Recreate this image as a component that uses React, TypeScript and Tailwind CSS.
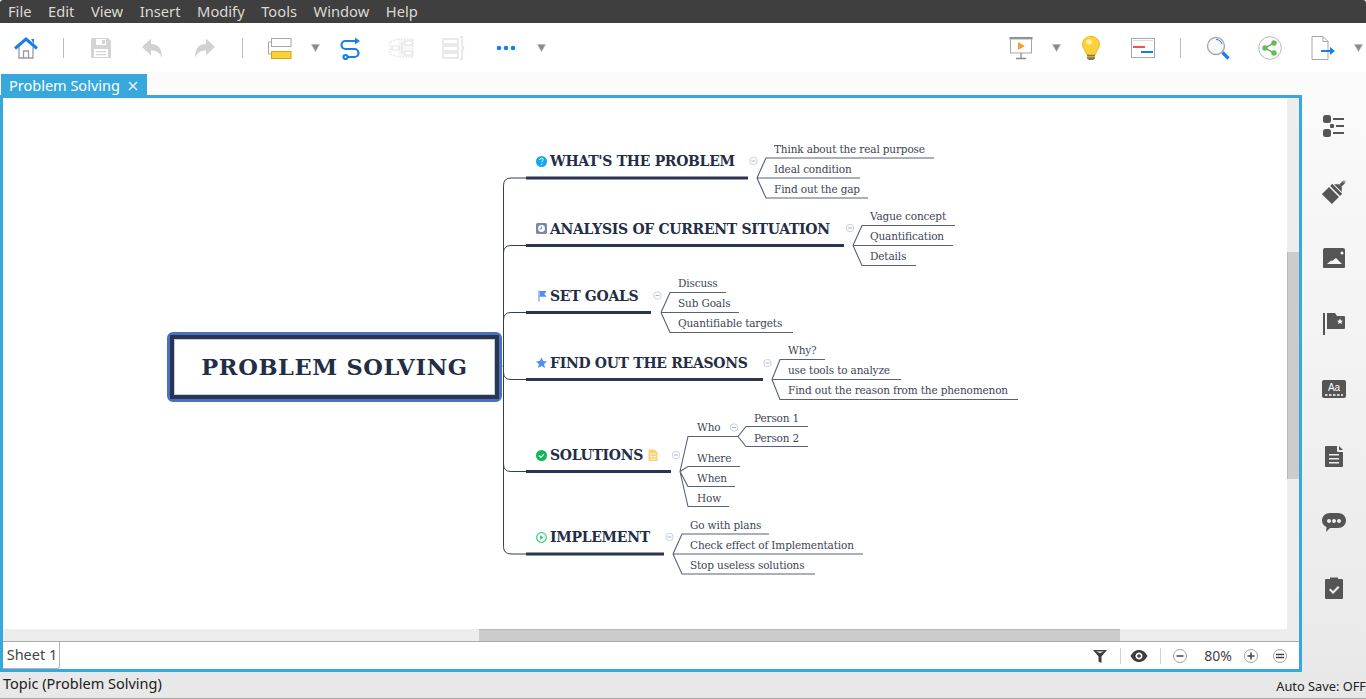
const menuItems = ['File', 'Edit', 'View', 'Insert', 'Modify', 'Tools', 'Window', 'Help']

const mainTopics = [
  { text: "WHAT'S THE PROBLEM", pos: 'left-[550px] top-[151px]' },
  { text: 'ANALYSIS OF CURRENT SITUATION', pos: 'left-[550px] top-[219px]' },
  { text: 'SET GOALS', pos: 'left-[550px] top-[286px]' },
  { text: 'FIND OUT THE REASONS', pos: 'left-[550px] top-[353px]' },
  { text: 'SOLUTIONS', pos: 'left-[550px] top-[445px]' },
  { text: 'IMPLEMENT', pos: 'left-[550px] top-[527px]' },
]

const subTopics = [
  { text: 'Think about the real purpose', pos: 'left-[774px] top-[142px]' },
  { text: 'Ideal condition', pos: 'left-[774px] top-[162px]' },
  { text: 'Find out the gap', pos: 'left-[774px] top-[182px]' },
  { text: 'Vague concept', pos: 'left-[870px] top-[209px]' },
  { text: 'Quantification', pos: 'left-[870px] top-[229px]' },
  { text: 'Details', pos: 'left-[870px] top-[249px]' },
  { text: 'Discuss', pos: 'left-[678px] top-[276px]' },
  { text: 'Sub Goals', pos: 'left-[678px] top-[296px]' },
  { text: 'Quantifiable targets', pos: 'left-[678px] top-[316px]' },
  { text: 'Why?', pos: 'left-[788px] top-[343px]' },
  { text: 'use tools to analyze', pos: 'left-[788px] top-[363px]' },
  { text: 'Find out the reason from the phenomenon', pos: 'left-[788px] top-[383px]' },
  { text: 'Who', pos: 'left-[697px] top-[420px]' },
  { text: 'Person 1', pos: 'left-[754px] top-[411px]' },
  { text: 'Person 2', pos: 'left-[754px] top-[431px]' },
  { text: 'Where', pos: 'left-[697px] top-[451px]' },
  { text: 'When', pos: 'left-[697px] top-[471px]' },
  { text: 'How', pos: 'left-[697px] top-[491px]' },
  { text: 'Go with plans', pos: 'left-[690px] top-[518px]' },
  { text: 'Check effect of Implementation', pos: 'left-[690px] top-[538px]' },
  { text: 'Stop useless solutions', pos: 'left-[690px] top-[558px]' },
]

const thickLines = [
  [526, 748, 178],
  [526, 844, 245.5],
  [526, 651, 312.5],
  [526, 763, 379.5],
  [526, 671, 471.5],
  [526, 664, 554],
]

const branchPaths = [
  'M757 178 L766 158 H934 M757 178 H860 M757 178 L766 198 H868',
  'M853 245.500 L862 225.500 H955 M853 245.500 H953 M853 245.500 L862 265.500 H916',
  'M661 312.500 L670 292.500 H726 M661 312.500 H739 M661 312.500 L670 332.500 H793',
  'M772 379.500 L780 359.500 H825 M772 379.500 H901 M772 379.500 L780 399.500 H1018',
  'M680 471.500 L688 436.500 H738 L746 426.500 H808 M738 436.500 L746 446.500 H808 M680 471.500 L688 466.500 H740 M680 471.500 L688 486.500 H735 M680 471.500 L688 506.500 H729',
  'M673 554 L682 534 H769 M673 554 H863 M673 554 L682 574 H815',
]

const collapseDots = [
  [753.5, 161],
  [850, 228],
  [657.5, 295.5],
  [767.5, 363],
  [676, 455],
  [734, 427.5],
  [669.5, 537],
]

function Caret() {
  return (
    <svg width="9" height="9" viewBox="0 0 9 9">
      <path d="M0.500 1.500H8.500L4.500 8.500Z" fill="#8a8a8a" stroke="#b5b5b5" strokeWidth="0.6" />
    </svg>
  )
}

function Separator() {
  return <div className="h-[20px] w-px bg-[#bdbdbd]" />
}

function Collapse({ x, y }: { x: number; y: number }) {
  return (
    <g fill="none" stroke="#c4d0ec" strokeWidth="1">
      <circle cx={x} cy={y} r="3.7" fill="#fff" />
      <path d={`M${x - 2} ${y}H${x + 2}`} stroke="#aab4c8" />
    </g>
  )
}

function MindMap() {
  return (
    <div className="relative min-w-0 flex-1 overflow-hidden bg-white">
      <div className="absolute -left-[3px] -top-[98px] h-[699px] w-[1366px] font-['DejaVu_Serif',serif] text-[#232d45]">
        <svg className="absolute left-0 top-0" width="1366" height="699" viewBox="0 0 1366 699" fill="none">
          <path d="M497 366H503.500" stroke="#8f97a8" />
          <path
            d="M526 178H511Q503.500 178 503.500 185.500V546.500Q503.500 554 511 554H526M526 245.500H511Q503.500 245.500 503.500 253M526 312.500H511Q503.500 312.500 503.500 320M503.500 372Q503.500 379.500 511 379.500H526M503.500 464Q503.500 471.500 511 471.500H526"
            stroke="#343d52"
          />
          {branchPaths.map((d) => (
            <path key={d} d={d} stroke="#596176" strokeWidth="1.1" />
          ))}
          {thickLines.map(([a, b, y]) => (
            <path key={y} d={`M${a} ${y}H${b}`} stroke="#2a3550" strokeWidth="3" />
          ))}
          {collapseDots.map(([x, y]) => (
            <Collapse key={x} x={x} y={y} />
          ))}

          <circle cx="541.500" cy="161.500" r="5.500" fill="#10a8f0" />
          <path d="M539.800 160q.1-1.800 1.800-1.800 1.700.1 1.700 1.500c0 1.300-1.600 1.300-1.600 2.600" stroke="#fff" strokeWidth="1" />
          <circle cx="541.700" cy="164.400" r=".6" fill="#fff" />

          <rect x="536" y="223" width="11" height="11" rx="1.500" fill="#7c86ab" />
          <circle cx="541.500" cy="228.500" r="3.400" fill="#fff" />
          <path d="M541.500 226.500v2.400h-2" stroke="#7c86ab" strokeWidth="1" />

          <path d="M539 290.500v11" stroke="#8fb4f4" strokeWidth="1.600" />
          <path d="M539.800 291h6.800l-2.200 3 2.200 2.800h-6.800z" fill="#4d8ff2" />

          <path d="M541.500 357.500l1.700 3.600 3.800.4-2.900 2.600.9 3.900-3.500-2-3.500 2 .9-3.900-2.900-2.600 3.800-.4z" fill="#4d8ff2" />

          <circle cx="541.500" cy="455.500" r="5.500" fill="#0cb95a" />
          <path d="M539 455.500l1.800 1.800 3.200-3.200" stroke="#fff" strokeWidth="1.200" />
          <path d="M648.500 449.500h6l3 3v8.500h-9z" fill="#f9d36f" />
          <path d="M650 454h6M650 456.500h6M650 459h6" stroke="#fff" strokeWidth=".8" />

          <circle cx="541.500" cy="537.500" r="4.800" stroke="#2fd078" strokeWidth="1.200" />
          <path d="M540 535.300l3.600 2.200-3.600 2.200z" fill="#2fd078" />
        </svg>

        <div className="absolute left-[167px] top-[332px] flex h-[70px] w-[335px] rounded-md border-[3px] border-[#4a70c0] bg-white">
          <div className="flex flex-1 items-center justify-center border-[4px] border-[#2a3550] text-[22.5px] font-bold leading-none tracking-[0.65px] shadow-[inset_0_0_0_1px_#c5cbd8]">
            PROBLEM SOLVING
          </div>
        </div>

        {mainTopics.map((topic) => (
          <div key={topic.text} className={`absolute whitespace-nowrap text-[14px] font-bold leading-[20px] tracking-[-0.3px] ${topic.pos}`}>
            {topic.text}
          </div>
        ))}
        {subTopics.map((topic) => (
          <div key={topic.text} className={`absolute whitespace-nowrap text-[10.5px] leading-[14px] tracking-[-0.15px] text-[#3d4558] ${topic.pos}`}>
            {topic.text}
          </div>
        ))}
      </div>
    </div>
  )
}

function SideIcons() {
  return (
    <div className="flex w-[64px] flex-col items-center gap-[42px] bg-gradient-to-b from-[#fbfbfb] to-[#e9e9e9] pt-[42px] text-[#555555]">
      <svg width="24" height="24" viewBox="0 0 24 24" fill="currentColor">
        <rect x="1" y="1" width="8" height="8" rx="2.500" />
        <rect x="1" y="15" width="8" height="8" rx="2.500" />
        <rect x="8" y="10" width="4" height="4" rx="1" />
        <path d="M11 4h11v2H11zM14 11h8v2h-8zM11 18h11v2H11z" />
      </svg>
      <svg width="24" height="24" viewBox="0 0 24 24" fill="currentColor">
        <g transform="rotate(45 12 12)">
          <path fillRule="evenodd" d="M10.500 -2a1.500 1.500 0 0 1 3 0v5h-3zM11.300 -2.200a.7.7 0 1 0 1.400 0 .7.7 0 1 0-1.400 0z" />
          <path d="M10 3h4l3.500 3.500h-11zM5 7.500h14v3H5zM5 12h14v10H5z" />
        </g>
      </svg>
      <svg width="24" height="24" viewBox="0 0 24 24" fill="currentColor">
        <path fillRule="evenodd" d="M3 2h18a2 2 0 0 1 2 2v17a1 1 0 0 1-1 1H2a1 1 0 0 1-1-1V4a2 2 0 0 1 2-2zm2 16h15l-6-6-4 3-1-.5zM18.500 7a1.500 1.500 0 1 0 0-.1z" />
      </svg>
      <svg width="24" height="24" viewBox="0 0 24 24" fill="currentColor">
        <path fillRule="evenodd" d="M1 1h2v22H1zM5 1h8l2 3h7a1 1 0 0 1 1 1v11a1 1 0 0 1-1 1H5zm13 5.500l-1 2-2 .2 1.500 1.400-.5 2 2-1 2 1-.5-2 1.500-1.400-2-.2z" />
      </svg>
      <svg width="24" height="24" viewBox="0 0 24 24">
        <rect y="2" width="24" height="18" rx="2" fill="currentColor" />
        <text x="12" y="13" textAnchor="middle" fontSize="10" fill="#fff" fontFamily="'Liberation Sans',sans-serif">
          Aa
        </text>
        <path d="M3 17h18" stroke="#fff" strokeWidth="1.500" strokeDasharray="2.500 1.500" />
      </svg>
      <svg width="24" height="24" viewBox="0 0 24 24" fill="currentColor">
        <path fillRule="evenodd" d="M4 2a1 1 0 0 0-1 1v19a1 1 0 0 0 1 1h16a1 1 0 0 0 1-1V8h-5a1 1 0 0 1-1-1V2zM7 10h10v1.500H7zm0 4h10v1.500H7zm0 4h10v1.500H7zM17 2l4 4h-4z" />
      </svg>
      <svg width="24" height="24" viewBox="0 0 24 24" fill="currentColor">
        <path fillRule="evenodd" d="M8 3h8c4.500 0 8 3 8 7.500S20.500 18 16 18H8l-4 4 .5-5C2 16 0 13.500 0 10.500 0 6 3.500 3 8 3zm-1 6a2 2 0 1 0 .01 0zM12 9a2 2 0 1 0 .01 0zm5 0a2 2 0 1 0 .01 0z" />
      </svg>
      <svg width="24" height="24" viewBox="0 0 24 24" fill="currentColor">
        <path fillRule="evenodd" d="M4 3h4V1.500h8V3h4a1 1 0 0 1 1 1v18a1 1 0 0 1-1 1H4a1 1 0 0 1-1-1V4a1 1 0 0 1 1-1zm3 11l1.500-1.500L11 15l5-5 1.500 1.500L11 18z" />
      </svg>
    </div>
  )
}

function Toolbar() {
  return (
    <div className="flex h-[49px] items-center bg-white pl-[14px] pr-[3px]">
      <svg width="24" height="24" viewBox="0 0 24 24" fill="none">
        <path d="M5 11v11h14V11" stroke="#9a9a9a" strokeWidth="1.300" fill="#fff" />
        <path d="M9.500 22v-7h5v7" stroke="#9a9a9a" strokeWidth="1.300" />
        <path d="M1 12.500L12 3l11 9.500" stroke="#1a7ee8" strokeWidth="3" />
        <path d="M17 3h3v5" fill="#1a7ee8" />
      </svg>
      <div className="ml-[25px]"><Separator /></div>
      <svg className="ml-[25px]" width="24" height="24" viewBox="0 0 24 24">
        <path fillRule="evenodd" d="M3 2h16l3 3v17H2V3zM7 3v6h10V3zM13 4h3v4h-3zM5 13v8h14v-8zM7 15h10v1.200H7zM7 18h10v1.200H7z" fill="#d4d4d4" />
      </svg>
      <svg className="ml-[27px]" width="24" height="24" viewBox="0 0 24 24">
        <path d="M2 11L11 2.500V8c7 0 11 4 11 14-2-5-5-7.500-11-7.500v5z" fill="#d2d2d2" />
      </svg>
      <svg className="ml-[29px]" width="24" height="24" viewBox="0 0 24 24">
        <path d="M22 11L13 2.500V8C6 8 2 12 2 22c2-5 5-7.500 11-7.500v5z" fill="#d2d2d2" />
      </svg>
      <div className="ml-[25px]"><Separator /></div>
      <svg className="ml-[25px]" width="24" height="24" viewBox="0 0 24 24" fill="none">
        <rect x="3.500" y="2.500" width="19.500" height="8" fill="#fff" stroke="#a6a6a6" />
        <path d="M3.500 6H0.500V18H3.500" stroke="#a6a6a6" />
        <rect x="3.500" y="15.500" width="19.500" height="7" fill="#ffd233" stroke="#d2a520" />
      </svg>
      <div className="ml-[19px]"><Caret /></div>
      <svg className="ml-[18px]" width="24" height="24" viewBox="0 0 24 24" fill="none" stroke="#1a7ee8" strokeWidth="2.200">
        <path d="M19 5H7.500a4 4 0 0 0 0 8h9a4 4 0 0 1 0 8H9" />
        <path d="M17 1.500l5 3.500-5 3.500z" fill="#1a7ee8" stroke="none" />
        <circle cx="7.500" cy="21" r="2" fill="#fff" />
      </svg>
      <svg className="ml-[27px]" width="26" height="24" viewBox="0 0 26 24" fill="none" stroke="#e2e2e2">
        <path d="M1 6l8-3M1 18l8 3M9 3h15v18H9M1 6v12" fill="#f6f6f6" strokeDasharray="2 1" />
        <rect x="3" y="10" width="7" height="4" fill="#fff" />
        <rect x="16" y="5" width="7" height="4" fill="#fff" />
        <rect x="16" y="15" width="7" height="4" fill="#fff" />
        <path d="M10 12h3M13 7v10M13 7h3M13 17h3" />
      </svg>
      <svg className="ml-[27px]" width="24" height="24" viewBox="0 0 24 24" fill="none" stroke="#dedede" strokeWidth="1.300">
        <rect x="1" y="3" width="15" height="5" />
        <rect x="1" y="10" width="15" height="5" />
        <rect x="1" y="17" width="15" height="5" />
        <path d="M18 1h2v9l2 2-2 2v9h-2" />
      </svg>
      <svg className="ml-[28px]" width="24" height="24" viewBox="0 0 24 24" fill="#1a7ee8">
        <circle cx="5" cy="12" r="2.300" />
        <circle cx="12" cy="12" r="2.300" />
        <circle cx="19" cy="12" r="2.300" />
      </svg>
      <div className="ml-[19px]"><Caret /></div>

      <svg className="ml-auto" width="24" height="24" viewBox="0 0 24 24" fill="none">
        <rect x="0.500" y="1" width="23" height="2.500" fill="#8a8a8a" />
        <rect x="1.500" y="3" width="21" height="14" fill="#fff" stroke="#a8a8a8" />
        <path d="M9 6l7 4-7 4z" fill="#f2a032" />
        <path d="M12 17v5M7 22.500h10" stroke="#8a8a8a" strokeWidth="1.300" />
      </svg>
      <div className="ml-[19px]"><Caret /></div>
      <svg className="ml-[18px]" width="24" height="24" viewBox="0 0 24 24">
        <path d="M12 .5c5 0 8.500 3.500 8.500 8 0 4-3.500 6-4 10h-9c-.5-4-4-6-4-10 0-4.500 3.500-8 8.500-8z" fill="#fdd13b" stroke="#eeb31e" />
        <path d="M8 19h8v3.500l-2 1.500h-4l-2-1.500z" fill="#7f7654" />
        <path d="M8 20.800h8" stroke="#e4c75a" />
        <ellipse cx="10" cy="6" rx="3" ry="2.500" fill="#fff0a8" />
      </svg>
      <svg className="ml-[28px]" width="24" height="24" viewBox="0 0 24 24" fill="none">
        <rect x="0.500" y="2.500" width="23" height="19" fill="#fff" stroke="#a8a8a8" />
        <path d="M2 4.500h20" stroke="#dcdcdc" />
        <path d="M2 11h12" stroke="#f0544f" strokeWidth="2" />
        <path d="M10 16h12" stroke="#1a7ee8" strokeWidth="2" />
      </svg>
      <div className="ml-[25px]"><Separator /></div>
      <svg className="ml-[25px]" width="24" height="24" viewBox="0 0 24 24" fill="none">
        <circle cx="10" cy="10" r="8.500" fill="#f8f9fb" stroke="#a9a9a9" strokeWidth="1.300" />
        <path d="M10 3.500a6.500 6.500 0 0 1 6 4.500" stroke="#1a7ee8" />
        <path d="M16.500 16.500l6 6" stroke="#1a7ee8" strokeWidth="3.200" />
      </svg>
      <svg className="ml-[28px]" width="24" height="24" viewBox="0 0 24 24" fill="none">
        <circle cx="12" cy="12" r="11.300" fill="#fff" stroke="#b9b9b9" />
        <path d="M7 12l9-5M7 12l9 5" stroke="#65bb5a" strokeWidth="1.500" />
        <circle cx="7" cy="12" r="2.700" fill="#65bb5a" />
        <circle cx="16" cy="7" r="2.700" fill="#65bb5a" />
        <circle cx="16" cy="17" r="2.700" fill="#65bb5a" />
      </svg>
      <svg className="ml-[29px]" width="24" height="24" viewBox="0 0 24 24" fill="none">
        <path d="M1 .5h11l5 5v18H1z" fill="#fff" stroke="#a8a8a8" />
        <path d="M12 .5v5h5" stroke="#a8a8a8" />
        <path d="M10 15h10" stroke="#1a7ee8" strokeWidth="2" />
        <path d="M19 11l5 4-5 4z" fill="#1a7ee8" />
      </svg>
      <div className="ml-[19px]"><Caret /></div>
    </div>
  )
}

function SheetBar() {
  return (
    <div className="flex h-[28px] items-center border-t border-[#aaaaaa] bg-white text-[#444444]">
      <div className="flex h-full w-[57px] items-center justify-center rounded-br-[3px] border-b border-r border-[#b5b5b5] pb-px pl-[2px] text-[14.5px]">
        Sheet 1
      </div>
      <svg className="ml-auto" width="16" height="16" viewBox="0 0 16 16" fill="#3d3d3d">
        <path fillRule="evenodd" d="M1 2h14L9.500 8.500V15l-3-1.500v-5zM4 3.500l4 1.500 4-1.500z" />
      </svg>
      <div className="ml-[12px] mr-[9px] h-[16px] w-px bg-[#d0d0d0]" />
      <svg width="18" height="14" viewBox="0 0 18 14" fill="#3d3d3d">
        <path fillRule="evenodd" d="M0.500 7C3 2.500 6 1 9 1s6 1.500 8.500 6C15 11.500 12 13 9 13S3 11.500.5 7zM9 3.500a3.500 3.500 0 1 0 .01 0z" />
        <circle cx="9" cy="7" r="1.800" />
      </svg>
      <div className="mx-[12px] h-[16px] w-px bg-[#d0d0d0]" />
      <svg className="mr-[14px]" width="14" height="14" viewBox="0 0 14 14" fill="none" stroke="#444444">
        <circle cx="7" cy="7" r="6.500" stroke="#a0a0a0" />
        <path d="M3.500 7h7" strokeWidth="1.500" />
      </svg>
      <span className="w-[34px] text-center text-[14px]">80%</span>
      <svg className="ml-[9px]" width="14" height="14" viewBox="0 0 14 14" fill="none" stroke="#444444">
        <circle cx="7" cy="7" r="6.500" stroke="#a0a0a0" />
        <path d="M3.500 7h7M7 3.500v7" strokeWidth="1.500" />
      </svg>
      <svg className="ml-[15px] mr-[12px]" width="14" height="14" viewBox="0 0 14 14" fill="none" stroke="#444444">
        <circle cx="7" cy="7" r="6.500" stroke="#a0a0a0" />
        <path d="M3 5.500h8M3 8.500h8" strokeWidth="1.500" />
      </svg>
    </div>
  )
}

export default function App() {
  return (
    <div className="flex h-[699px] w-[1366px] flex-col overflow-hidden bg-white font-['Noto_Sans',sans-serif]">
      <div className="flex h-[23px] items-center gap-[16.6px] rounded-t-[3px] bg-[#3f3f3f] pl-2 text-[14.7px] text-[#dcd9d3]">
        {menuItems.map((item) => (
          <span key={item}>{item}</span>
        ))}
      </div>
      <Toolbar />
      <div className="flex min-h-0 flex-1">
        <div className="flex w-[1302px] flex-col bg-[#fbfbfb]">
          <div className="flex h-[23px] items-end pl-px">
            <div className="flex h-[21px] w-[146px] items-center gap-[8px] bg-[#38a8dc] pl-2 pt-[2px] text-[14.5px] text-white">
              Problem Solving
              <svg width="10" height="10" viewBox="0 0 10 10" stroke="#fff" strokeWidth="1.300">
                <path d="M1 1l8 8M9 1l-8 8" />
              </svg>
            </div>
          </div>
          <div className="flex min-h-0 flex-1 flex-col border-[3px] border-[#38a8dc]">
            <div className="flex min-h-0 flex-1">
              <MindMap />
              <div className="flex w-[12px] flex-col bg-[#ededed] pt-[154px]">
                <div className="h-[227px] border-l border-[#b9b9b9] bg-[#cccccc]" />
              </div>
            </div>
            <div className="h-[12px] bg-[#ededed] pl-[476px]">
              <div className="h-full w-[641px] border-t border-[#b9b9b9] bg-[#cccccc]" />
            </div>
            <SheetBar />
          </div>
        </div>
        <SideIcons />
      </div>
      <div className="flex h-[27px] items-start justify-between border-b border-[#a8a8a8] bg-[#e8e8e8] pl-[3px] text-[#222222]">
        <span className="text-[14.5px] leading-[23px]">Topic (Problem Solving)</span>
        <span className="mt-[6px] text-[12.8px] leading-[17px]">Auto Save: OFF</span>
      </div>
    </div>
  )
}
